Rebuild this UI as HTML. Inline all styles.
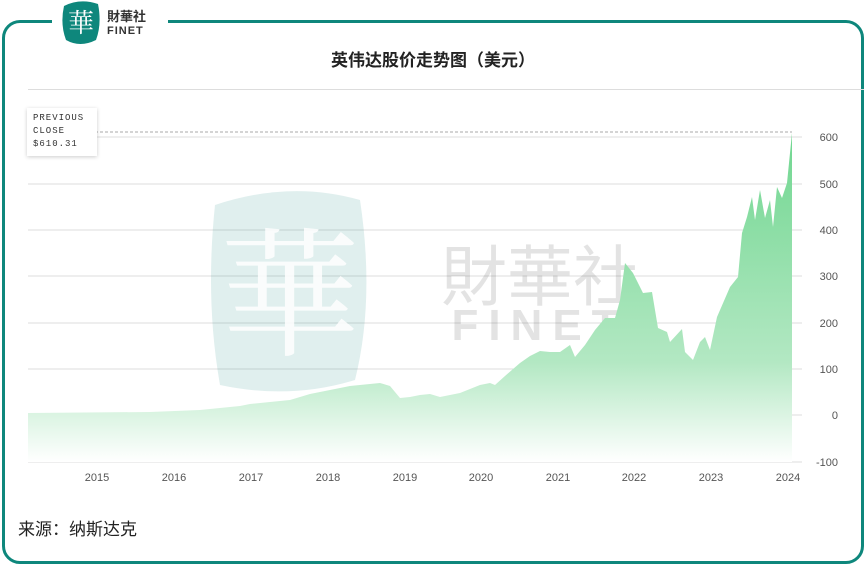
<!DOCTYPE html><html><head><meta charset="utf-8"><style>
body{margin:0;width:866px;height:586px;background:#fff;font-family:"Liberation Sans","Noto Sans CJK SC",sans-serif;position:relative;overflow:hidden}
.frame{position:absolute;left:2px;top:20px;width:856px;height:538px;border:3px solid #0e877c;border-radius:18px}
.gap{position:absolute;left:52px;top:10px;width:116px;height:20px;background:#fff}
.title{position:absolute;top:46px;left:0;width:866px;text-align:center;font-size:17px;font-weight:bold;color:#222}
.src{position:absolute;left:18px;top:515px;font-size:17px;color:#222}
</style></head><body>
<div class="frame"></div><div class="gap"></div>
<svg style="position:absolute;left:60px;top:0" width="42" height="46"><path d="M4 6 Q20 -2 38 4 Q42 24 36 40 Q20 48 6 40 Q0 24 4 6Z" fill="#0e877c"/><text x="21" y="32" text-anchor="middle" font-size="26" fill="#fff" font-family="Noto Serif CJK SC,serif">華</text></svg>
<div style="position:absolute;left:107px;top:10px;font-size:13px;font-weight:bold;color:#333;line-height:13px">財華社<br><span style="font-size:11px;letter-spacing:1px">FINET</span></div>
<div class="title">英伟达股价走势图（美元）</div>
<div style="position:absolute;left:28px;top:89px;width:836px;height:1px;background:#ddd"></div>
<svg style="position:absolute;left:0;top:0" width="866" height="500">
<defs><linearGradient id="g" x1="0" y1="130" x2="0" y2="462" gradientUnits="userSpaceOnUse"><stop offset="0" stop-color="#6fd68f"/><stop offset="0.7" stop-color="#b3e8c3"/><stop offset="1" stop-color="#fff"/></linearGradient></defs>
<g stroke="#ddd" stroke-width="1"><line x1="28" x2="802" y1="137" y2="137"/><line x1="28" x2="802" y1="184" y2="184"/><line x1="28" x2="802" y1="230" y2="230"/><line x1="28" x2="802" y1="276" y2="276"/><line x1="28" x2="802" y1="323" y2="323"/><line x1="28" x2="802" y1="369" y2="369"/><line x1="28" x2="802" y1="415" y2="415"/><line x1="28" x2="802" y1="462" y2="462"/></g>
<line x1="95" x2="792" y1="132" y2="132" stroke="#aaa" stroke-dasharray="3,2"/>
<g opacity="0.13"><path d="M215 205 Q290 180 360 200 Q375 300 355 380 Q290 400 220 385 Q205 300 215 205Z" fill="#0e877c"/><text x="540" y="300" text-anchor="middle" font-size="66" fill="#333">財華社</text><text x="540" y="340" text-anchor="middle" font-size="44" font-weight="bold" fill="#333" letter-spacing="10">FINET</text></g>
<text x="290" y="345" text-anchor="middle" font-size="140" fill="#fff" opacity="0.85" font-family="Noto Serif CJK SC,serif">華</text>
<path fill="url(#g)" d="M28 462 L28 413 L150 412 L200 410 L240 406 L250 404 L270 402 L290 400 L310 394 L330 390 L350 386 L380 383 L390 386 L400 398 L410 397 L420 395 L430 394 L440 397 L460 393 L480 385 L490 383 L495 385 L505 376 L520 363 L530 356 L540 351 L550 352 L560 352 L570 345 L575 357 L585 345 L595 330 L605 318 L615 318 L620 300 L625 263 L633 273 L643 293 L652 292 L658 328 L667 332 L670 342 L682 329 L685 352 L693 360 L700 342 L705 337 L710 350 L717 317 L730 287 L738 277 L742 233 L747 217 L752 197 L755 220 L760 190 L765 218 L770 200 L773 227 L777 187 L782 198 L787 183 L792 133 L792 462Z"/>
<g font-size="11" fill="#555" text-anchor="end"><text x="838" y="141">600</text><text x="838" y="188">500</text><text x="838" y="234">400</text><text x="838" y="280">300</text><text x="838" y="327">200</text><text x="838" y="373">100</text><text x="838" y="419">0</text><text x="838" y="466">-100</text></g>
<g font-size="11" fill="#555" text-anchor="middle"><text x="97" y="481">2015</text><text x="174" y="481">2016</text><text x="251" y="481">2017</text><text x="328" y="481">2018</text><text x="405" y="481">2019</text><text x="481" y="481">2020</text><text x="558" y="481">2021</text><text x="634" y="481">2022</text><text x="711" y="481">2023</text><text x="788" y="481">2024</text></g>
</svg>
<div style="position:absolute;left:27px;top:108px;width:70px;height:48px;background:#fff;box-shadow:0 1px 4px rgba(0,0,0,.2);font-family:'Liberation Mono',monospace;font-size:9px;letter-spacing:1px;line-height:13px;color:#333;padding:4px 0 0 6px;box-sizing:border-box">PREVIOUS<br>CLOSE<br>$610.31</div>
<div class="src">来源：纳斯达克</div>
</body></html>
